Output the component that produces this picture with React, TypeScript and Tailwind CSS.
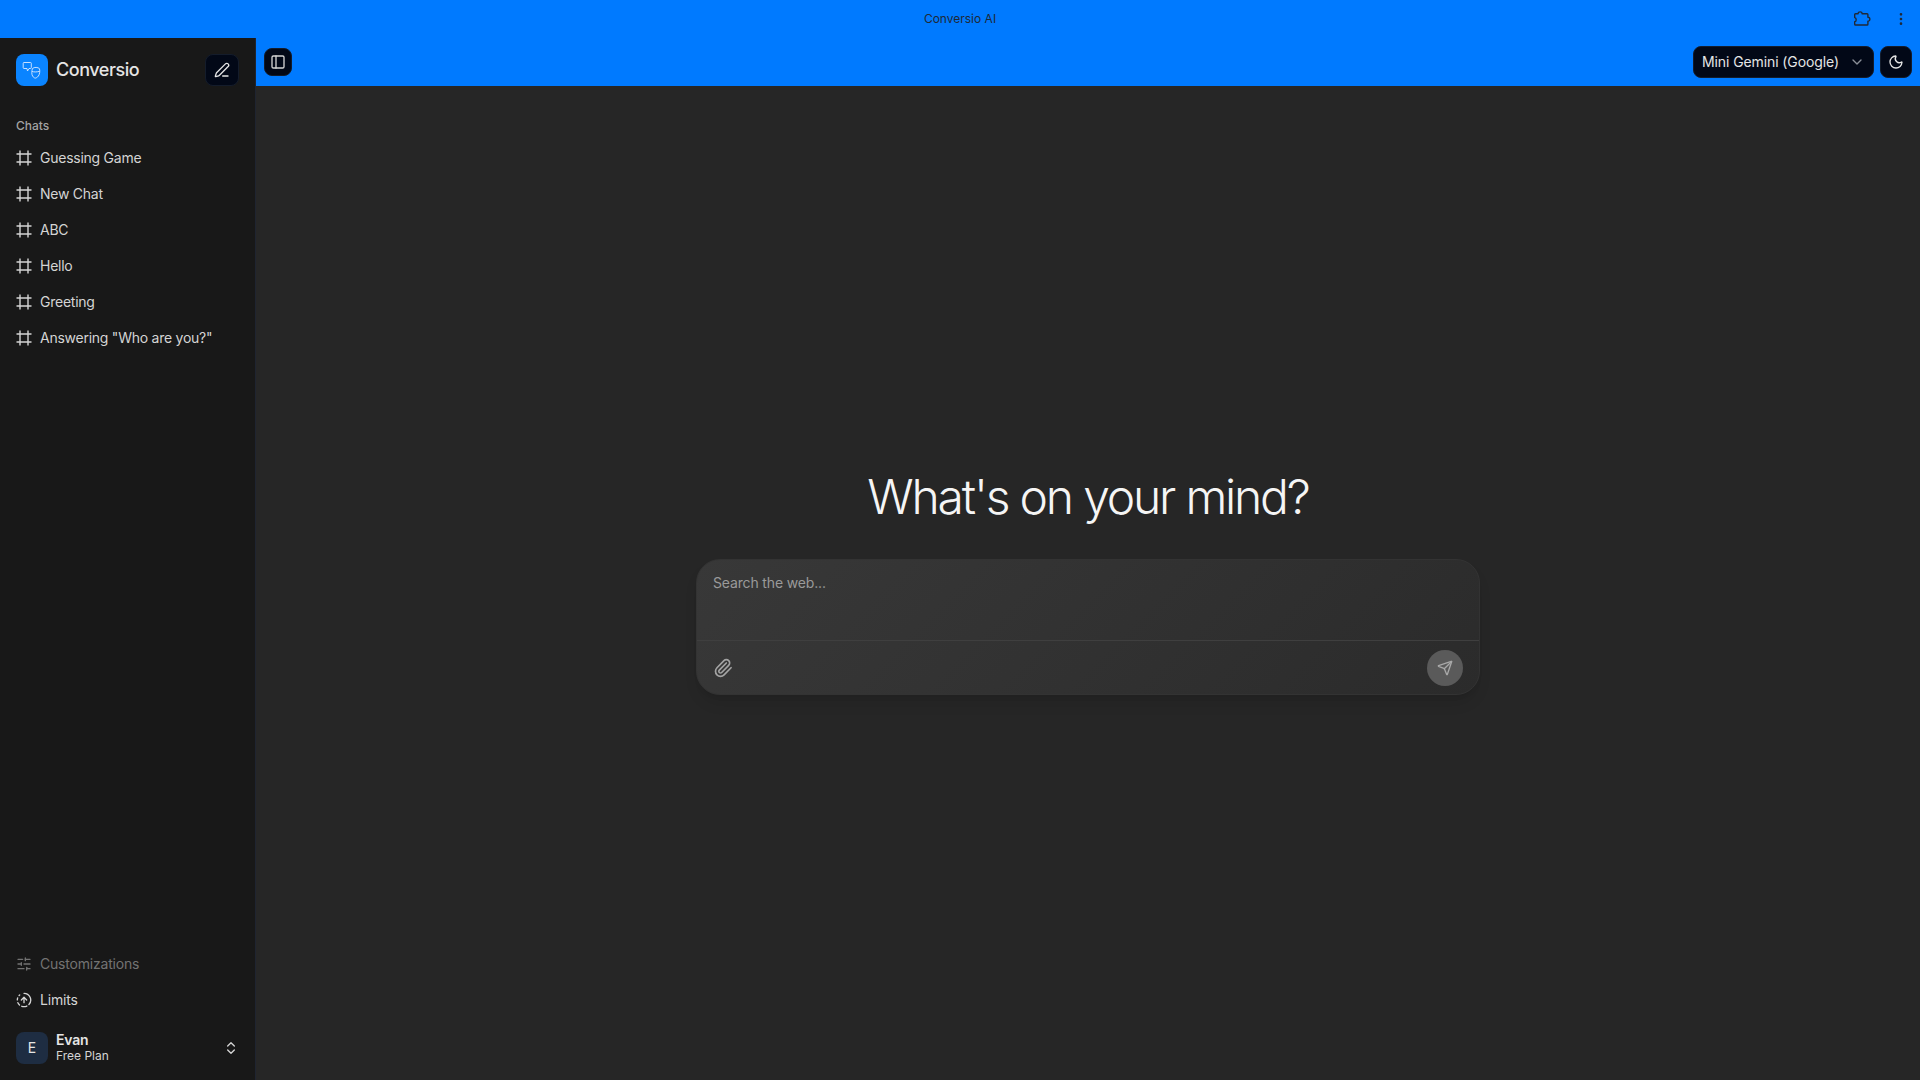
import {
  ChevronDown,
  ChevronsUpDown,
  CircleFadingArrowUp,
  EllipsisVertical,
  Moon,
  PanelLeft,
  Paperclip,
  PenLine,
  Send,
  SlidersHorizontal,
} from "lucide-react";

const chats = ["Guessing Game", "New Chat", "ABC", "Hello", "Greeting", 'Answering "Who are you?"'];

function HashIcon() {
  return (
    <svg width="16" height="16" viewBox="0 0 16 16" fill="none" stroke="currentColor" strokeWidth="1.4" className="shrink-0">
      <path d="M4 .5v15M12 .5v15M.5 4h15M.5 12h15" />
    </svg>
  );
}

function ExtensionIcon() {
  return (
    <svg width="18" height="16" viewBox="0 0 18 16" fill="none" stroke="#1f2937" strokeWidth="1.4" strokeLinejoin="round">
      <path d="M2.500 2.800h2.600c-.2-2.600 4.200-2.600 4 0h5a.8.8 0 0 1 .8.8v2.600c2.600-.2 2.600 4.200 0 4v3a.8.8 0 0 1-.8.8H2.500c-.5 0-.8-.3-.8-.8v-2.400c2-.2 2-4 0-4.200V3.600c0-.5.3-.8.8-.8z" />
    </svg>
  );
}

function Logo() {
  return (
    <div className="flex h-8 w-8 items-center justify-center rounded-lg bg-[#0a84ff]">
      <svg width="22" height="22" viewBox="0 0 22 22" fill="none" stroke="#dbeafe" strokeWidth="0.9">
        <path d="M3 3.500h6.500a.8.8 0 0 1 .8.8v4.400a.8.8 0 0 1-.8.8H8L6.500 12 6 9.500H3a.8.8 0 0 1-.8-.8V4.300A.8.8 0 0 1 3 3.500z" />
        <path d="M11.500 9.500c1.800-1.600 5.500-1.400 7 .2.6 2.600.2 5.600-1.200 7.400-.9 1.200-2.300 2-3 2-.8 0-2-.9-2.700-2-1.200-1.900-.9-5.400-.1-7.600z" />
        <path d="M11 12.500c2 .6 5 .6 7.500-.2" />
      </svg>
    </div>
  );
}

function Sidebar() {
  return (
    <aside className="flex w-[256px] shrink-0 flex-col border-r border-[#1f2430] bg-[#181818] text-[#d4d4d4]">
      <div className="flex items-center justify-between pt-[16px] pr-4 pl-4">
        <div className="flex items-center gap-2">
          <Logo />
          <span className="text-lg font-medium tracking-[-0.45px] text-[#e5e5e5]">Conversio</span>
        </div>
        <button className="flex h-8 w-[34px] items-center justify-center rounded-lg border border-[#141c2b] bg-[#020817] text-[#e5e5e5]">
          <PenLine size={16} />
        </button>
      </div>
      <div className="px-4 pt-[32px] pb-[6px] text-xs leading-4 font-medium text-[#a3a3a3]">Chats</div>
      <nav className="flex flex-col">
        {chats.map((c) => (
          <div key={c} className="flex h-9 items-center gap-2 px-4 text-sm tracking-[-0.25px] text-[#d4d4d4]">
            <HashIcon />
            <span>{c}</span>
          </div>
        ))}
      </nav>
      <div className="mt-auto flex flex-col">
        <div className="flex h-9 items-center gap-2 px-4 text-sm tracking-[-0.2px] text-[#737373]">
          <SlidersHorizontal size={16} />
          <span>Customizations</span>
        </div>
        <div className="flex h-9 items-center gap-2 px-4 text-sm tracking-[-0.2px] text-[#d4d4d4]">
          <CircleFadingArrowUp size={16} />
          <span>Limits</span>
        </div>
        <div className="flex items-center gap-2 px-4 pt-[14px] pb-4">
          <div className="flex h-8 w-8 items-center justify-center rounded-lg bg-[#1e2d42] text-sm text-[#e5e5e5]">E</div>
          <div className="flex flex-1 flex-col">
            <span className="text-sm leading-4 font-semibold tracking-[-0.2px] text-[#e5e5e5]">Evan</span>
            <span className="text-xs leading-4 text-[#d4d4d4]">Free Plan</span>
          </div>
          <ChevronsUpDown size={16} className="text-[#d4d4d4]" />
        </div>
      </div>
    </aside>
  );
}

function Composer() {
  return (
    <div className="w-[784px] overflow-hidden rounded-3xl border border-[#333333] bg-[linear-gradient(135deg,#383838,#2b2b2b)] shadow-lg">
      <div className="h-[81px] border-b border-[#3f3f3f] px-4 py-[13px] text-sm leading-5 tracking-[-0.15px] text-[#9a9a9a]">Search the web...</div>
      <div className="flex h-[53px] items-center justify-between pr-4 pl-4">
        <Paperclip size={20} className="text-[#a3a3a3]" />
        <button className="flex h-9 w-9 items-center justify-center rounded-full bg-[#5a5a5a] text-[#a8a8a8]">
          <Send size={16} />
        </button>
      </div>
    </div>
  );
}

export default function App() {
  return (
    <div className="flex h-screen w-full flex-col bg-[#007aff] font-['Inter',sans-serif]">
      <div className="relative flex h-[38px] shrink-0 items-center justify-center">
        <span className="text-xs text-[#1f2937]">Conversio AI</span>
        <div className="absolute top-0 right-0 flex h-[38px] items-center">
          <ExtensionIcon />
          <EllipsisVertical size={16} className="mr-[11px] ml-[22px] text-[#1f2937]" />
        </div>
      </div>
      <div className="flex min-h-0 flex-1">
        <Sidebar />
        <div className="flex min-w-0 flex-1 flex-col">
          <header className="flex h-[48px] shrink-0 items-center justify-between px-2">
            <button className="flex h-7 w-7 items-center justify-center rounded-lg border border-[#141c2b] bg-[#020817] text-[#d4d4d4]">
              <PanelLeft size={16} />
            </button>
            <div className="flex items-center gap-[6px]">
              <button className="flex h-8 w-[181px] items-center justify-between rounded-lg border border-[#141c2b] bg-[#020817] pr-[8px] pl-[8px] text-sm tracking-[-0.1px] text-[#e5e5e5]">
                <span>Mini Gemini (Google)</span>
                <ChevronDown size={16} className="text-[#8a8f98]" />
              </button>
              <button className="flex h-8 w-8 items-center justify-center rounded-lg border border-[#141c2b] bg-[#020817] text-[#e5e5e5]">
                <Moon size={16} />
              </button>
            </div>
          </header>
          <main className="flex flex-1 flex-col items-center justify-center bg-[#262626] pt-[2px]">
            <h1 className="mb-[38px] text-5xl font-light tracking-[-2.2px] text-[#f5f5f5]">What's on your mind?</h1>
            <Composer />
          </main>
        </div>
      </div>
    </div>
  );
}
